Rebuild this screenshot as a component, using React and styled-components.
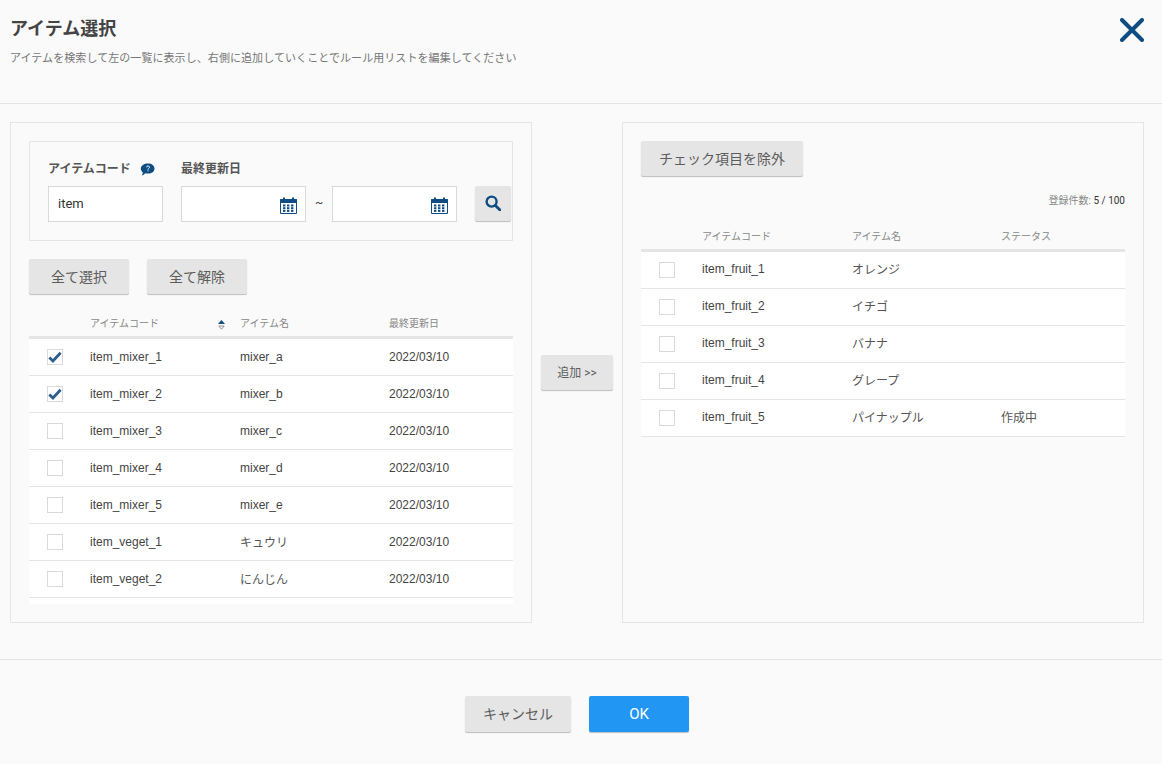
import React from 'react'
import styled, { createGlobalStyle } from 'styled-components'

const GlobalStyle = createGlobalStyle`
  html, body {
    margin: 0;
    padding: 0;
    background: #fafafa;
  }
  body {
    font-family: Roboto, "Noto Sans CJK JP", sans-serif;
    color: #444;
  }
  * {
    box-sizing: border-box;
  }
`

const Page = styled.div`
  width: 1162px;
  height: 764px;
  overflow: hidden;
`

const Header = styled.header`
  display: flex;
  justify-content: space-between;
  height: 104px;
  padding: 17px 18px 0 10px;
  border-bottom: 1px solid #e5e5e5;
`

const Title = styled.h1`
  margin: 0;
  font-size: 18px;
  line-height: 24px;
  font-weight: 700;
  color: #444;
`

const Subtitle = styled.p`
  margin: 10px 0 0;
  font-size: 11px;
  line-height: 16px;
  letter-spacing: 0.07px;
  color: #777;
`

const CloseButton = styled.button`
  width: 24px;
  height: 24px;
  margin-top: 1px;
  padding: 0;
  border: 0;
  background: none;
`

const Body = styled.main`
  display: flex;
  align-items: center;
  padding: 18px 18px 0 10px;
`

const Panel = styled.section`
  width: 522px;
  height: 501px;
  padding: 18px;
  border: 1px solid #e5e5e5;
`

const Middle = styled.div`
  display: flex;
  justify-content: center;
  width: 90px;
`

const FilterBox = styled.div`
  display: flex;
  align-items: flex-start;
  height: 100px;
  padding: 16px 1px 18px 18px;
  border: 1px solid #e5e5e5;
`

const Field = styled.div`
  display: flex;
  flex-direction: column;
  margin-right: ${p => p.$gap || 0}px;
`

const Label = styled.div`
  display: flex;
  align-items: center;
  gap: 9px;
  height: 18px;
  margin-bottom: 10px;
  font-size: 12px;
  font-weight: 700;
  color: #555;
`

const DateRow = styled.div`
  display: flex;
  align-items: center;
`

const Tilde = styled.span`
  width: 26px;
  padding-bottom: 2px;
  text-align: center;
  font-size: 12px;
  color: #444;
`

const InputWrap = styled.div`
  display: flex;
  align-items: center;
  justify-content: ${p => (p.$date ? 'flex-end' : 'flex-start')};
  width: ${p => p.$width}px;
  height: 36px;
  padding: 0 8px 0 9px;
  border: 1px solid #d9d9d9;
  background: #fff;
  font-size: 13px;
  color: #333;
`

const InputText = styled.span`
  padding-bottom: 2px;
`

const Button = styled.button`
  display: flex;
  align-items: center;
  justify-content: center;
  flex: none;
  width: ${p => p.$width}px;
  height: ${p => p.$height || 35}px;
  margin-top: ${p => p.$top || 0}px;
  padding: 0 0 ${p => (p.$primary ? 0 : 2)}px;
  border: 0;
  border-radius: 2px;
  background: ${p => (p.$primary ? '#2196f3' : '#e5e5e5')};
  box-shadow: 0 1px 1px rgba(0, 0, 0, 0.25);
  font-family: inherit;
  font-size: ${p => p.$size || 14}px;
  color: ${p => (p.$primary ? '#fff' : '#5c5c5c')};
`

const ButtonRow = styled.div`
  display: flex;
  gap: 18px;
  margin-top: 18px;
`

const Count = styled.div`
  margin-top: 18px;
  height: 13px;
  text-align: right;
  font-size: 10px;
  line-height: 13px;
  color: #888;

  b {
    font-weight: 400;
    color: #333;
  }
`

const Columns = styled.div`
  display: grid;
  grid-template-columns: 61px 150px 149px 1fr;
  align-items: center;
`

const TableHead = styled(Columns)`
  height: 45px;
  padding-top: 15px;
  border-bottom: 3px solid #e5e5e5;
  font-size: 10px;
  color: #888;
`

const HeadCell = styled.div`
  display: flex;
  align-items: center;
  justify-content: space-between;
  padding-right: 15px;
`

const List = styled.div`
  height: ${p => (p.$height ? `${p.$height}px` : 'auto')};
  background: ${p => (p.$height ? '#fff' : 'transparent')};
  overflow: hidden;
`

const Row = styled(Columns)`
  height: 37px;
  border-bottom: 1px solid #e5e5e5;
  background: #fff;
  font-family: "Liberation Sans", "Noto Sans CJK JP", sans-serif;
  font-size: 12px;
  color: #444;
`

// $lift moves the text up inside the centred row
const Cell = styled.span`
  padding-bottom: ${p => (p.$lift || 0) * 2}px;
  color: ${p => (p.$jp ? '#555' : '#444')};
`

const Check = styled.span`
  display: flex;
  align-items: center;
  justify-content: center;
  width: 16px;
  height: 16px;
  margin-left: 18px;
  border: 1px solid #d9d9d9;
  background: #fff;
`

const Footer = styled.footer`
  display: flex;
  justify-content: center;
  gap: 18px;
  margin-top: 36px;
  padding: 36px 8px 0 0;
  border-top: 1px solid #e5e5e5;
`

const HelpSvg = styled.svg`
  margin-top: 5px;
`

const CalendarSvg = styled.svg`
  margin-top: 3px;
`

const SortSvg = styled.svg`
  margin-top: 4px;
`

const BLUE = '#0f4c81'

const CloseIcon = () => (
  <svg width="24" height="24" viewBox="0 0 24 24">
    <path d="M2 2 L22 22 M22 2 L2 22" stroke={BLUE} strokeWidth="4" strokeLinecap="round" />
  </svg>
)

const HelpIcon = () => (
  <HelpSvg width="15" height="13" viewBox="0 0 15 13">
    <path d="M8 0.5 C11.8 0.5 14.5 2.6 14.5 5.6 C14.5 8.6 11.8 10.6 8 10.6 C6.9 10.6 6 10.5 5.2 10.2 C4.4 11.3 3.2 12.3 1.6 12.6 C2.4 11.6 2.8 10.5 2.8 9.4 C1.4 8.4 0.8 7.1 0.8 5.6 C0.8 2.6 4.2 0.5 8 0.5 Z" fill={BLUE} />
    <path d="M6.5 4.3 C6.6 3.4 7.2 3 8 3 C8.9 3 9.5 3.5 9.5 4.2 C9.5 5.3 8 5.3 8 6.6" fill="none" stroke="#fff" strokeWidth="1" />
    <rect x="7.5" y="7.3" width="1" height="1" fill="#fff" />
  </HelpSvg>
)

const CalendarIcon = () => (
  <CalendarSvg width="17" height="17" viewBox="0 0 17 17">
    <path d="M0.5 2.5 H16.5 V16.5 H0.5 Z" fill="#fff" stroke={BLUE} />
    <rect x="0.5" y="2" width="16" height="4" fill={BLUE} />
    <rect x="3" y="0.5" width="2" height="3" fill={BLUE} />
    <rect x="12" y="0.5" width="2" height="3" fill={BLUE} />
    {[3, 7, 11].map(x =>
      [7.5, 10.2, 12.9].map(y => <rect key={`${x}${y}`} x={x} y={y} width="2.4" height="2" fill={BLUE} />)
    )}
  </CalendarSvg>
)

const SearchIcon = () => (
  <svg width="16" height="16" viewBox="0 0 16 16">
    <circle cx="6.6" cy="6.6" r="5" fill="none" stroke={BLUE} strokeWidth="2.4" />
    <path d="M10.4 10.4 L15 15" stroke={BLUE} strokeWidth="2.8" strokeLinecap="round" />
  </svg>
)

const SortIcon = () => (
  <SortSvg width="7" height="10" viewBox="0 0 7 10">
    <path d="M3.5 0 L7 4 H0 Z" fill={BLUE} />
    <path d="M0.8 6 H6.2 L3.5 9.2 Z" fill="none" stroke="#888" strokeWidth="0.9" />
  </SortSvg>
)

const CheckMark = () => (
  <svg width="14" height="12" viewBox="0 0 14 12">
    <path d="M1.3 6.4 L5 10 L12.6 1.8" fill="none" stroke="#2f5d8c" strokeWidth="2.8" />
  </svg>
)

const mixers = [
  ['item_mixer_1', 'mixer_a', true],
  ['item_mixer_2', 'mixer_b', true],
  ['item_mixer_3', 'mixer_c'],
  ['item_mixer_4', 'mixer_d'],
  ['item_mixer_5', 'mixer_e'],
  ['item_veget_1', 'キュウリ', false, true],
  ['item_veget_2', 'にんじん', false, true],
]

const fruits = [
  ['item_fruit_1', 'オレンジ'],
  ['item_fruit_2', 'イチゴ'],
  ['item_fruit_3', 'バナナ'],
  ['item_fruit_4', 'グレープ'],
  ['item_fruit_5', 'パイナップル', '作成中'],
]

export default function App() {
  return (
    <Page>
      <GlobalStyle />
      <Header>
        <div>
          <Title>アイテム選択</Title>
          <Subtitle>アイテムを検索して左の一覧に表示し、右側に追加していくことでルール用リストを編集してください</Subtitle>
        </div>
        <CloseButton aria-label="閉じる"><CloseIcon /></CloseButton>
      </Header>

      <Body>
        <Panel>
          <FilterBox>
            <Field $gap={18}>
              <Label>アイテムコード <HelpIcon /></Label>
              <InputWrap $width={115}><InputText>item</InputText></InputWrap>
            </Field>
            <Field $gap={18}>
              <Label>最終更新日</Label>
              <DateRow>
                <InputWrap $width={125} $date><CalendarIcon /></InputWrap>
                <Tilde>~</Tilde>
                <InputWrap $width={125} $date><CalendarIcon /></InputWrap>
              </DateRow>
            </Field>
            <Button $width={36} $top={28} aria-label="検索"><SearchIcon /></Button>
          </FilterBox>
          <ButtonRow>
            <Button $width={100}>全て選択</Button>
            <Button $width={100}>全て解除</Button>
          </ButtonRow>
          <TableHead>
            <span />
            <HeadCell>アイテムコード <SortIcon /></HeadCell>
            <span>アイテム名</span>
            <span>最終更新日</span>
          </TableHead>
          <List $height={265}>
            {mixers.map(([code, name, checked, jp]) => (
              <Row key={code}>
                <Check>{checked && <CheckMark />}</Check>
                <Cell>{code}</Cell>
                <Cell $jp={jp} $lift={jp ? 1 : 0}>{name}</Cell>
                <Cell>2022/03/10</Cell>
              </Row>
            ))}
          </List>
        </Panel>

        <Middle>
          <Button $width={72} $size={12}>追加 &gt;&gt;</Button>
        </Middle>

        <Panel>
          <Button $width={162}>チェック項目を除外</Button>
          <Count>登録件数: <b>5 / 100</b></Count>
          <TableHead>
            <span />
            <span>アイテムコード</span>
            <span>アイテム名</span>
            <span>ステータス</span>
          </TableHead>
          <List>
            {fruits.map(([code, name, status]) => (
              <Row key={code}>
                <Check />
                <Cell $lift={1}>{code}</Cell>
                <Cell $jp $lift={2}>{name}</Cell>
                <Cell $jp $lift={2}>{status}</Cell>
              </Row>
            ))}
          </List>
        </Panel>
      </Body>

      <Footer>
        <Button $width={106} $height={36}>キャンセル</Button>
        <Button $width={100} $height={36} $size={15} $primary>OK</Button>
      </Footer>
    </Page>
  )
}
